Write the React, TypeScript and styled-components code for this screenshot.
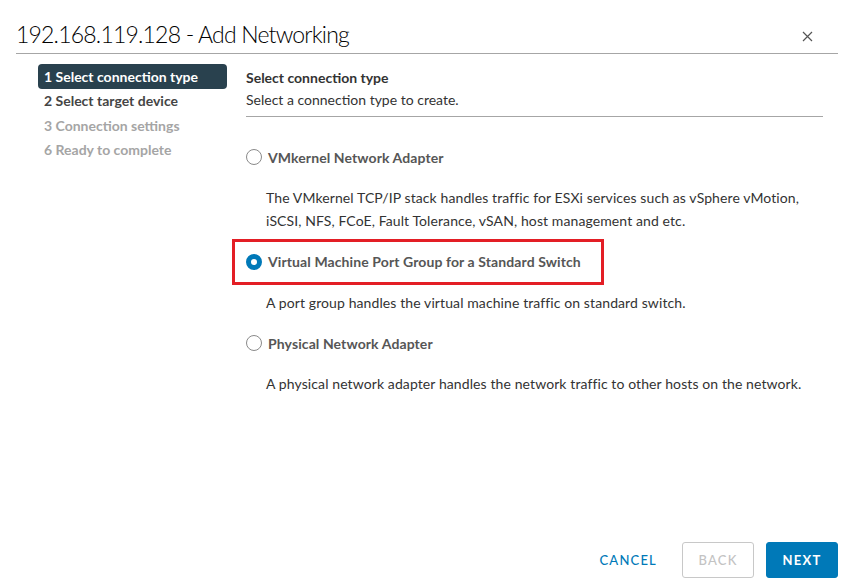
import React from "react";
import styled, { createGlobalStyle } from "styled-components";

const Global = createGlobalStyle`
  html, body { margin: 0; padding: 0; background: #fff; }
  body { font-family: Lato, "Open Sans", sans-serif; color: #565656; }
  * { box-sizing: border-box; }
`;

const Dialog = styled.div`
  width: 850px;
  height: 588px;
  display: flex;
  flex-direction: column;
  padding: 0 12px 10px 16px;
`;

const Header = styled.div`
  display: flex;
  align-items: flex-end;
  justify-content: space-between;
  height: 54px;
  padding-bottom: 4px;
  border-bottom: 1px solid #a6a6a6;
`;

const Title = styled.h1`
  margin: 0;
  font-size: 23px;
  font-weight: 300;
  color: #000;
  letter-spacing: -0.8px;
  line-height: 30px;
`;

const Close = styled.button`
  border: none;
  background: none;
  padding: 0;
  width: 14px;
  height: 14px;
  margin: 0 24px 6px 0;
  display: flex;
  align-items: center;
  justify-content: center;
  color: #555;
`;

const Body = styled.div`
  flex: 1;
  display: flex;
  padding-top: 10px;
`;

const Nav = styled.nav`
  width: 211px;
  padding-left: 22px;
  display: flex;
  flex-direction: column;
`;

const NavItem = styled.div<{ $state: "active" | "done" | "off" }>`
  height: 24.5px;
  display: flex;
  align-items: center;
  padding-left: 6px;
  font-size: 14px;
  font-weight: 700;
  border-radius: 4px;
  color: ${(p) => (p.$state === "active" ? "#fff" : p.$state === "done" ? "#454545" : "#a5a5a5")};
  background: ${(p) => (p.$state === "active" ? "#29414e" : "transparent")};
`;

const Main = styled.main`
  flex: 1;
  margin-left: 19px;
  margin-right: 15px;
  display: flex;
  flex-direction: column;
`;

const StepHead = styled.div`
  padding-top: 5px;
  padding-bottom: 8px;
  border-bottom: 1px solid #a6a6a6;
  margin-bottom: 27px;
`;

const StepTitle = styled.div`
  font-size: 14px;
  font-weight: 700;
  color: #333;
  line-height: 17px;
  margin-bottom: 5px;
`;

const StepSub = styled.div`
  font-size: 14px;
  color: #333;
  line-height: 17px;
`;

const Option = styled.div`
  display: flex;
  flex-direction: column;
`;

const RadioRow = styled.label<{ $highlight?: boolean }>`
  display: flex;
  align-items: center;
  gap: 6px;
  height: ${(p) => (p.$highlight ? "46px" : "26px")};
  margin-left: ${(p) => (p.$highlight ? "-14px" : "0")};
  padding-left: ${(p) => (p.$highlight ? "11px" : "0")};
  width: ${(p) => (p.$highlight ? "372px" : "auto")};
  border: ${(p) => (p.$highlight ? "3px solid #e31e25" : "none")};
  margin-top: ${(p) => (p.$highlight ? "-10px" : "0")};
  margin-bottom: ${(p) => (p.$highlight ? "-10px" : "0")};
`;

const RadioCircle = styled.span<{ $checked?: boolean }>`
  width: 16px;
  height: 16px;
  border-radius: 50%;
  flex: none;
  border: ${(p) => (p.$checked ? "5px solid #0079b8" : "1px solid #8a8a8a")};
  background: #fff;
`;

const OptionLabel = styled.span`
  font-size: 14px;
  font-weight: 700;
  letter-spacing: 0.1px;
  color: #565656;
`;

const Desc = styled.div`
  font-size: 14px;
  color: #333;
  line-height: 23px;
  letter-spacing: 0.1px;
  padding-left: 20px;
  margin-top: 16px;
  margin-bottom: 16.5px;
`;

const Footer = styled.div`
  display: flex;
  justify-content: flex-end;
  align-items: center;
  gap: 12px;
`;

const Btn = styled.button<{ $kind: "flat" | "outline" | "primary" }>`
  height: 36px;
  min-width: 72px;
  padding: 0 12px;
  border-radius: 3px;
  font-family: inherit;
  font-size: 13px;
  font-weight: ${(p) => (p.$kind === "primary" ? 700 : 500)};
  letter-spacing: 1.2px;
  text-transform: uppercase;
  border: 1px solid
    ${(p) => (p.$kind === "outline" ? "#c8c8c8" : p.$kind === "primary" ? "#0079b8" : "transparent")};
  background: ${(p) => (p.$kind === "primary" ? "#0079b8" : "#fff")};
  color: ${(p) => (p.$kind === "primary" ? "#fff" : p.$kind === "outline" ? "#c3c3c3" : "#0079b8")};
`;

const options = [
  {
    label: "VMkernel Network Adapter",
    desc: [
      "The VMkernel TCP/IP stack handles traffic for ESXi services such as vSphere vMotion,",
      "iSCSI, NFS, FCoE, Fault Tolerance, vSAN, host management and etc.",
    ],
  },
  {
    label: "Virtual Machine Port Group for a Standard Switch",
    desc: ["A port group handles the virtual machine traffic on standard switch."],
    checked: true,
  },
  {
    label: "Physical Network Adapter",
    desc: ["A physical network adapter handles the network traffic to other hosts on the network."],
  },
];

export default function App() {
  return (
    <>
      <Global />
      <Dialog>
        <Header>
          <Title>192.168.119.128 - Add Networking</Title>
          <Close aria-label="close">
            <svg width="11" height="11" viewBox="0 0 11 11">
              <path d="M1 1L10 10M10 1L1 10" stroke="#555" strokeWidth="1.2" />
            </svg>
          </Close>
        </Header>
        <Body>
          <Nav>
            <NavItem $state="active">1 Select connection type</NavItem>
            <NavItem $state="done">2 Select target device</NavItem>
            <NavItem $state="off">3 Connection settings</NavItem>
            <NavItem $state="off">6 Ready to complete</NavItem>
          </Nav>
          <Main>
            <StepHead>
              <StepTitle>Select connection type</StepTitle>
              <StepSub>Select a connection type to create.</StepSub>
            </StepHead>
            {options.map((o) => (
              <Option key={o.label}>
                <RadioRow $highlight={o.checked}>
                  <RadioCircle $checked={o.checked} />
                  <OptionLabel>{o.label}</OptionLabel>
                </RadioRow>
                <Desc>
                  {o.desc.map((d) => (
                    <div key={d}>{d}</div>
                  ))}
                </Desc>
              </Option>
            ))}
          </Main>
        </Body>
        <Footer>
          <Btn $kind="flat">Cancel</Btn>
          <Btn $kind="outline">Back</Btn>
          <Btn $kind="primary">Next</Btn>
        </Footer>
      </Dialog>
    </>
  );
}
